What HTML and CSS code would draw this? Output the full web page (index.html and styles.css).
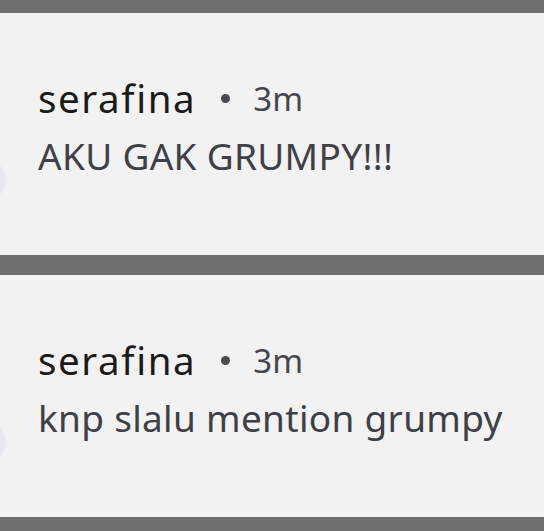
FILE: index.html
```html
<!DOCTYPE html>
<html>
<head>
<meta charset="utf-8">
<link rel="stylesheet" href="styles.css">
</head>
<body>
<div class="list">
  <div class="card">
    <div class="avatar"></div>
    <div class="content">
      <div class="meta"><span class="name">serafina</span><span class="dot"></span><span class="time">3m</span></div>
      <div class="msg">AKU GAK GRUMPY!!!</div>
    </div>
  </div>
  <div class="card">
    <div class="avatar"></div>
    <div class="content">
      <div class="meta"><span class="name">serafina</span><span class="dot"></span><span class="time">3m</span></div>
      <div class="msg">knp slalu mention grumpy</div>
    </div>
  </div>
</div>
</body>
</html>
```
FILE: styles.css
```css
html, body { margin: 0; padding: 0; }
body {
  background: #6f6f6f;
  width: 544px;
  height: 531px;
  overflow: hidden;
  font-family: "Noto Sans", "Inter", sans-serif;
}
.list {
  display: flex;
  flex-direction: column;
  gap: 20px;
  padding-top: 13px;
}
.card {
  height: 242px;
  background: #f2f2f2;
  display: flex;
  align-items: flex-start;
  overflow: hidden;
}
.avatar {
  flex: none;
  width: 40px;
  height: 40px;
  border-radius: 50%;
  background: #e9e8f1;
  margin-left: -34px;
  margin-top: 147px;
}
.content {
  padding-left: 32px;
  padding-top: 61px;
}
.meta {
  display: flex;
  align-items: center;
  height: 48px;
}
.name {
  font-size: 38.5px;
  color: #1a1a1a;
  letter-spacing: 1.6px;
}
.dot {
  width: 9px;
  height: 9px;
  border-radius: 50%;
  background: #4a4a50;
  margin: 0 23px 0 25px;
}
.time {
  font-size: 33px;
  color: #45454d;
}
.msg {
  font-size: 37px;
  color: #3e3f47;
  margin-top: 10px;
  line-height: 48px;
  letter-spacing: 0.3px;
}
```
